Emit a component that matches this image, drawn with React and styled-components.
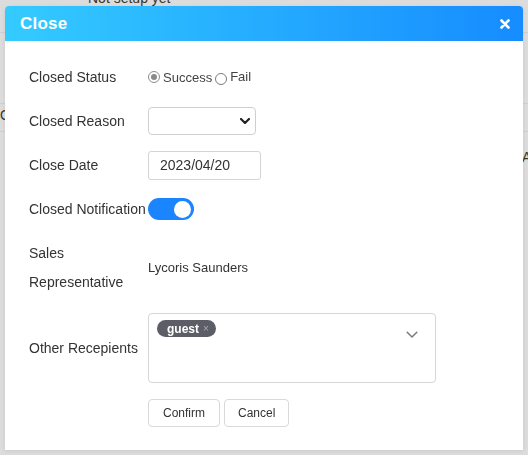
import React from 'react';
import styled, {createGlobalStyle} from 'styled-components';

const GlobalStyle = createGlobalStyle`
  html, body {
    margin: 0;
    padding: 0;
    height: 100%;
  }
  body {
    font-family: "Liberation Sans", Arial, sans-serif;
    background: #dcdcdc;
    overflow: hidden;
  }
`;

// the dimmed page behind the dialog
const Page = styled.div`
  height: 455px;
  background: #dcdcdc;
  color: #3b3520;
  font-size: 14px;
  white-space: nowrap;
  overflow: hidden;
`;

const PageTitle = styled.div`
  margin-top: -10px;
  padding-left: 88px;
  height: 43px;
  border-bottom: 1px solid #cfcfcf;
  box-sizing: border-box;
`;

const PageLine = styled.div`
  height: ${p => p.h}px;
  border-bottom: ${p => (p.line ? '1px solid #cfcfcf' : 'none')};
  box-sizing: border-box;
  padding-left: ${p => p.indent || 0}px;
  line-height: ${p => p.lh || p.h}px;
`;

const Dialog = styled.div`
  position: fixed;
  top: 6px;
  left: 5px;
  width: 518px;
  height: 444px;
  background: #fff;
  border-radius: 4px 4px 0 0;
  box-shadow: 0 1px 4px rgba(0, 0, 0, 0.08);
  overflow: hidden;
`;

const Header = styled.div`
  height: 35px;
  display: flex;
  align-items: center;
  justify-content: space-between;
  padding: 0 12px 0 15px;
  background: linear-gradient(to right, #34cbff, #168cff);
  color: #fff;
`;

const Title = styled.div`
  font-size: 17px;
  font-weight: bold;
  letter-spacing: 0.2px;
`;

const CloseBtn = styled.button`
  border: none;
  background: none;
  padding: 0;
  width: 12px;
  height: 12px;
  display: flex;
  align-items: center;
  justify-content: center;
  cursor: pointer;
`;

const Form = styled.div`
  display: flex;
  flex-direction: column;
  padding: 14px 0 0 24px;
  color: #333;
`;

const Row = styled.div`
  display: grid;
  grid-template-columns: 119px 1fr;
  align-items: center;
  height: ${p => p.h}px;
  margin-top: ${p => p.mt || 0}px;
`;

const Label = styled.div`
  font-size: 14px;
  white-space: nowrap;
  line-height: ${p => p.lh || 'normal'};
  padding-top: ${p => p.pt || 0}px;
`;

const Field = styled.div`
  display: flex;
  align-items: center;
  font-size: 13px;
`;

const Radio = styled.span`
  width: 12px;
  height: 12px;
  box-sizing: border-box;
  border-radius: 50%;
  border: 1px solid ${p => (p.checked ? '#8c8c8c' : '#7a7a7a')};
  margin-right: 3px;
  display: flex;
  align-items: center;
  justify-content: center;
  background: #fff;

  &::after {
    content: '';
    display: ${p => (p.checked ? 'block' : 'none')};
    width: 6px;
    height: 6px;
    border-radius: 50%;
    background: #8a8a8a;
  }
`;

const RadioLabel = styled.label`
  display: flex;
  align-items: center;
  margin-right: 3px;
  color: #444;
  padding-top: ${p => p.drop || 0}px;
`;

const RadioText = styled.span`
  position: relative;
  top: ${p => p.up || 0}px;
`;

const SelectBox = styled.div`
  width: 108px;
  height: 28px;
  box-sizing: border-box;
  border: 1px solid #cfcfcf;
  border-radius: 4px;
  display: flex;
  align-items: center;
  justify-content: flex-end;
  padding-right: 5px;
`;

const DateInput = styled.div`
  width: 113px;
  height: 29px;
  box-sizing: border-box;
  border: 1px solid #d4d4d4;
  border-radius: 3px;
  display: flex;
  align-items: center;
  padding-left: 11px;
  font-size: 14px;
  color: #333;
`;

const Toggle = styled.div`
  width: 46px;
  height: 22px;
  border-radius: 11px;
  background: #1a85ff;
  display: flex;
  align-items: center;
  justify-content: flex-end;
  padding: 0 3px;
  box-sizing: border-box;
`;

const Knob = styled.div`
  width: 17px;
  height: 17px;
  border-radius: 50%;
  background: #fff;
`;

const MultiSelect = styled.div`
  width: 288px;
  height: 70px;
  box-sizing: border-box;
  border: 1px solid #d6d6d6;
  border-radius: 4px;
  display: flex;
  align-items: flex-start;
  justify-content: space-between;
  padding: 6px 17px 0 8px;
`;

const Tag = styled.span`
  display: inline-flex;
  align-items: center;
  height: 17px;
  padding: 0 7px 0 10px;
  border-radius: 9px;
  background: #5d5d68;
  color: #fff;
  font-size: 12px;
  font-weight: bold;
`;

const TagX = styled.span`
  margin-left: 4px;
  font-weight: normal;
  font-size: 10px;
  color: #a9a9b0;
`;

const Buttons = styled.div`
  display: flex;
  gap: 4px;
`;

const Button = styled.button`
  height: 28px;
  padding: 0 ${p => p.px}px;
  background: #fff;
  border: 1px solid #d9d9d9;
  border-radius: 4px;
  font-family: "Liberation Sans", Arial, sans-serif;
  font-size: 12px;
  color: #333;
`;

const Chevron = ({w = 10, color = '#222', sw = 2}) => (
  <svg width={w} height={w * 0.6} viewBox="0 0 10 6">
    <polyline points="1,1 5,5 9,1" fill="none" stroke={color} strokeWidth={sw} strokeLinecap="round" strokeLinejoin="round" />
  </svg>
);

const App = () => {
  return (
    <>
      <GlobalStyle />
      <Page>
        <PageTitle>Not setup yet</PageTitle>
        <PageLine h={71} line />
        <PageLine h={28} lh={22} line>O</PageLine>
        <PageLine h={48} lh={50} indent={522}>Al</PageLine>
      </Page>
      <Dialog>
        <Header>
          <Title>Close</Title>
          <CloseBtn>
            <svg width="10" height="10" viewBox="0 0 10 10">
              <path d="M1.5 1.5 L8.5 8.5 M8.5 1.5 L1.5 8.5" stroke="#fff" strokeWidth="2.6" strokeLinecap="round" />
            </svg>
          </CloseBtn>
        </Header>
        <Form>
          <Row h={44}>
            <Label>Closed Status</Label>
            <Field>
              <RadioLabel>
                <Radio checked />
                <RadioText>Success</RadioText>
              </RadioLabel>
              <RadioLabel drop={3}>
                <Radio />
                <RadioText up={-2}>Fail</RadioText>
              </RadioLabel>
            </Field>
          </Row>

          <Row h={44}>
            <Label>Closed Reason</Label>
            <Field>
              <SelectBox>
                <Chevron w={10} sw={2.2} />
              </SelectBox>
            </Field>
          </Row>

          <Row h={44}>
            <Label>Close Date</Label>
            <Field>
              <DateInput>2023/04/20</DateInput>
            </Field>
          </Row>

          <Row h={44}>
            <Label>Closed Notification</Label>
            <Field>
              <Toggle>
                <Knob />
              </Toggle>
            </Field>
          </Row>

          <Row h={72}>
            <Label lh="29px" pt={2}>
              Sales<br />Representative
            </Label>
            <Field>Lycoris Saunders</Field>
          </Row>

          <Row h={70} mt={10}>
            <Label>Other Recepients</Label>
            <Field>
              <MultiSelect>
                <Tag>
                  guest<TagX>×</TagX>
                </Tag>
                <div style={{paddingTop: 6}}>
                  <Chevron w={12} color="#777" sw={1.2} />
                </div>
              </MultiSelect>
            </Field>
          </Row>

          <Row h={28} mt={16}>
            <div />
            <Buttons>
              <Button px={14}>Confirm</Button>
              <Button px={13}>Cancel</Button>
            </Buttons>
          </Row>
        </Form>
      </Dialog>
    </>
  );
};

export default App;
